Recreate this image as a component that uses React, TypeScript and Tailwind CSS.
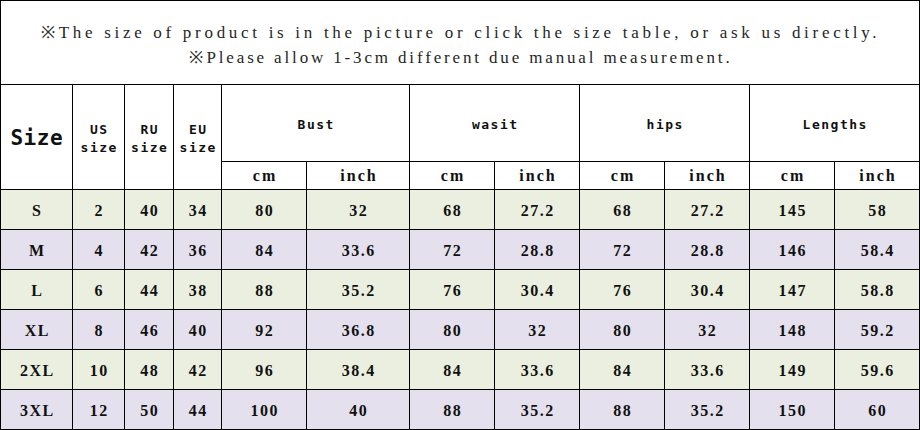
import React from "react";

const rows = [
  ["S", "2", "40", "34", "80", "32", "68", "27.2", "68", "27.2", "145", "58"],
  ["M", "4", "42", "36", "84", "33.6", "72", "28.8", "72", "28.8", "146", "58.4"],
  ["L", "6", "44", "38", "88", "35.2", "76", "30.4", "76", "30.4", "147", "58.8"],
  ["XL", "8", "46", "40", "92", "36.8", "80", "32", "80", "32", "148", "59.2"],
  ["2XL", "10", "48", "42", "96", "38.4", "84", "33.6", "84", "33.6", "149", "59.6"],
  ["3XL", "12", "50", "44", "100", "40", "88", "35.2", "88", "35.2", "150", "60"],
];

const serif = "font-['Liberation_Serif',serif]";
const sansMono = "font-[DejaVu_Sans_Mono]";

function TwoLine({ top }: { top: string }) {
  return (
    <div
      className={`bg-white row-span-2 flex flex-col items-center justify-center pt-[4px] ${sansMono} font-bold text-[13px] leading-[18px] tracking-[1.5px] text-[#111]`}
    >
      <span className="pl-[1.5px]">{top}</span>
      <span className="pl-[1.5px]">size</span>
    </div>
  );
}

function Group({ label }: { label: string }) {
  return (
    <div
      className={`bg-white col-span-2 flex items-center justify-center pt-[4px] ${sansMono} font-bold text-[13px] leading-[18px] tracking-[1.5px] text-[#111]`}
    >
      <span className="pl-[1.5px]">{label}</span>
    </div>
  );
}

function Unit({ label }: { label: string }) {
  return (
    <div
      className={`bg-white flex items-center justify-center pt-[1px] ${serif} font-bold text-[16px] leading-[18px] tracking-[2px] text-[#111]`}
    >
      <span className="pl-[2px]">{label}</span>
    </div>
  );
}

export default function App() {
  return (
    <div className="w-[920px] h-[430px] bg-black p-px grid gap-px grid-cols-[71px_51px_48px_47px_84px_102px_84px_84px_84px_84px_84px_84px] grid-rows-[83px_76px_27px_39px_39px_39px_39px_39px_39px]">
      <div
        className={`col-span-12 bg-white flex flex-col items-center justify-center pt-[5px] ${serif} text-[17px] leading-[25px] text-[#262626] whitespace-pre`}
      >
        <div className="tracking-[3.7px]">
          <span className="inline-block w-[17px] mr-[2px] text-center tracking-normal">※</span>
          The size of product is in the picture or click the size table, or ask us directly.
        </div>
        <div className="tracking-[2.85px]">
          <span className="inline-block w-[17px] mr-[2px] text-center tracking-normal">※</span>
          Please allow 1-3cm different due manual measurement.
        </div>
      </div>

      <div
        className={`bg-white row-span-2 flex items-center justify-center pt-[2px] ${sansMono} font-bold text-[21px] leading-[24px] tracking-[0.5px] text-[#111]`}
      >
        <span className="pl-[0.5px]">Size</span>
      </div>
      <TwoLine top="US" />
      <TwoLine top="RU" />
      <TwoLine top="EU" />
      <Group label="Bust" />
      <Group label="wasit" />
      <Group label="hips" />
      <Group label="Lengths" />

      {Array.from({ length: 4 }).map((_, i) => (
        <React.Fragment key={i}>
          <Unit label="cm" />
          <Unit label="inch" />
        </React.Fragment>
      ))}

      {rows.map((r, ri) =>
        r.map((v, ci) => (
          <div
            key={`${ri}-${ci}`}
            className={`${ri % 2 === 0 ? "bg-[#ebefdf]" : "bg-[#e4e0ed]"} flex items-center justify-center pt-[2px] ${serif} font-bold text-[16px] leading-[18px] tracking-[1.5px] text-[#111]`}
          >
            <span className="pl-[1.5px]">{v}</span>
          </div>
        ))
      )}
    </div>
  );
}
